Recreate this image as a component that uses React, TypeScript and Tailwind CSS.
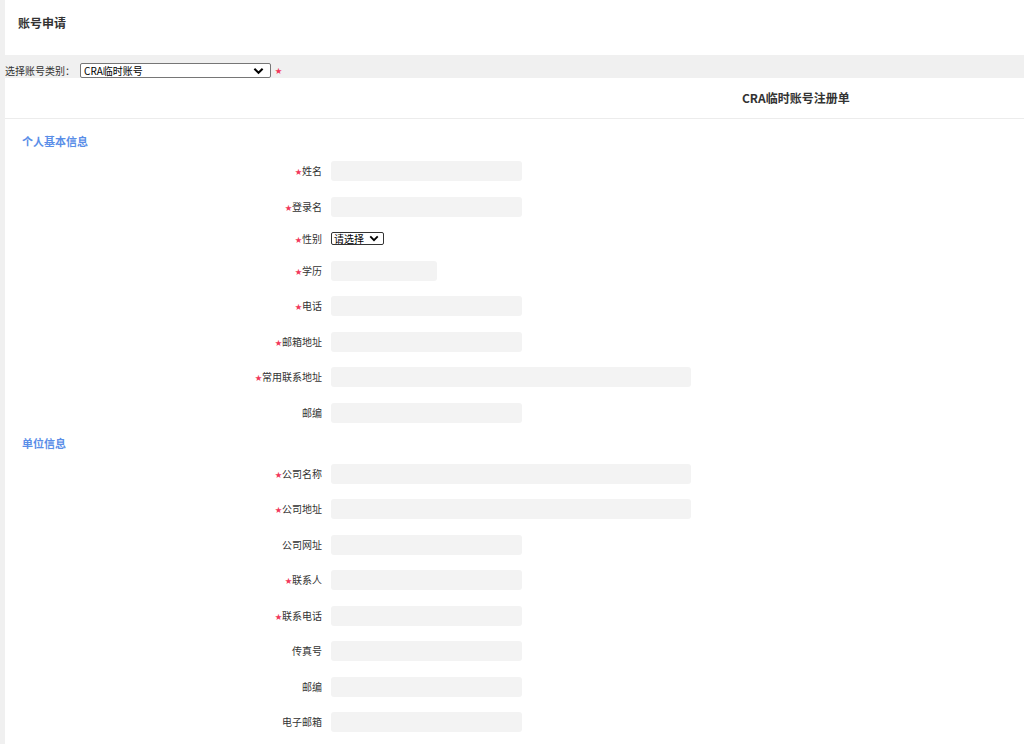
import React from 'react';

type Field = { label: string; required?: boolean; width?: 'sm' | 'md' | 'lg'; kind?: 'select' };

const personal: Field[] = [
  { label: '姓名', required: true },
  { label: '登录名', required: true },
  { label: '性别', required: true, kind: 'select' },
  { label: '学历', required: true, width: 'sm' },
  { label: '电话', required: true },
  { label: '邮箱地址', required: true },
  { label: '常用联系地址', required: true, width: 'lg' },
  { label: '邮编' },
];

const company: Field[] = [
  { label: '公司名称', required: true, width: 'lg' },
  { label: '公司地址', required: true, width: 'lg' },
  { label: '公司网址' },
  { label: '联系人', required: true },
  { label: '联系电话', required: true },
  { label: '传真号' },
  { label: '邮编' },
  { label: '电子邮箱' },
];

const Chevron = ({ className }: { className?: string }) => (
  <svg viewBox="0 0 12 8" className={className} fill="none" stroke="currentColor" strokeWidth="2.2">
    <path d="M1.5 1.5 L6 6 L10.5 1.5" />
  </svg>
);

const Row = ({ f }: { f: Field }) => {
  const w = f.width === 'lg' ? 'w-[360px]' : f.width === 'sm' ? 'w-[106px]' : 'w-[191px]';
  return (
    <div className="flex items-center">
      <div className="w-[326px] text-right text-[10px] text-[#333] pr-[9px] leading-none">
        {f.required && <span className="text-[#f2365a] text-[7px] align-[1px]">★</span>}
        {f.label}
      </div>
      {f.kind === 'select' ? (
        <div className="h-[13px] w-[53px] border border-[#333] rounded-[2px] bg-white flex items-center justify-between pl-[2px] pr-[4px] text-[10px] text-black leading-none">
          <span>请选择</span>
          <Chevron className="w-[10px] h-[7px]" />
        </div>
      ) : (
        <div className={`h-[20px] ${w} bg-[#f3f3f3] rounded-[3px]`} />
      )}
    </div>
  );
};

const Section = ({ title, fields }: { title: string; fields: Field[] }) => (
  <div>
    <div className="pl-[17px] h-[14px] flex items-center text-[11px] font-bold text-[#5a8ee8] leading-none">{title}</div>
    <div className="mt-[13px] flex flex-col gap-[15.5px]">
      {fields.map((f, i) => (
        <Row key={i} f={f} />
      ))}
    </div>
  </div>
);

export default function App() {
  return (
    <div
      className="w-[1024px] h-[744px] overflow-hidden bg-[#f0f0f0] pl-[5px] text-[#333]"
      style={{ fontFamily: '"Noto Sans CJK SC", "Noto Sans", sans-serif' }}
    >
      <div className="h-[55px] bg-white pl-[13px] flex items-center">
        <h1 className="text-[12px] font-bold text-[#333] -mt-[9px]">账号申请</h1>
      </div>

      <div className="h-[23px] flex items-end">
        <div className="flex items-center h-[15px]">
          <span className="text-[10px] text-[#333] leading-none w-[75px]">选择账号类别：</span>
          <div className="h-[15px] w-[191px] border border-[#767676] rounded-[2px] bg-white flex items-center justify-between pl-[3px] pr-[6px] text-[10px] text-black leading-none">
            <span>CRA临时账号</span>
            <Chevron className="w-[11px] h-[8px]" />
          </div>
          <span className="text-[#f2365a] text-[7px] ml-[4px]">★</span>
        </div>
      </div>

      <div className="bg-white h-full">
        <div className="h-[41px] border-b border-[#ececec] flex items-center pl-[737px]">
          <h2 className="text-[12px] font-bold text-[#333]">CRA临时账号注册单</h2>
        </div>
        <div className="pt-[15px]">
          <Section title="个人基本信息" fields={personal} />
          <div className="mt-[14px]">
            <Section title="单位信息" fields={company} />
          </div>
        </div>
      </div>
    </div>
  );
}
